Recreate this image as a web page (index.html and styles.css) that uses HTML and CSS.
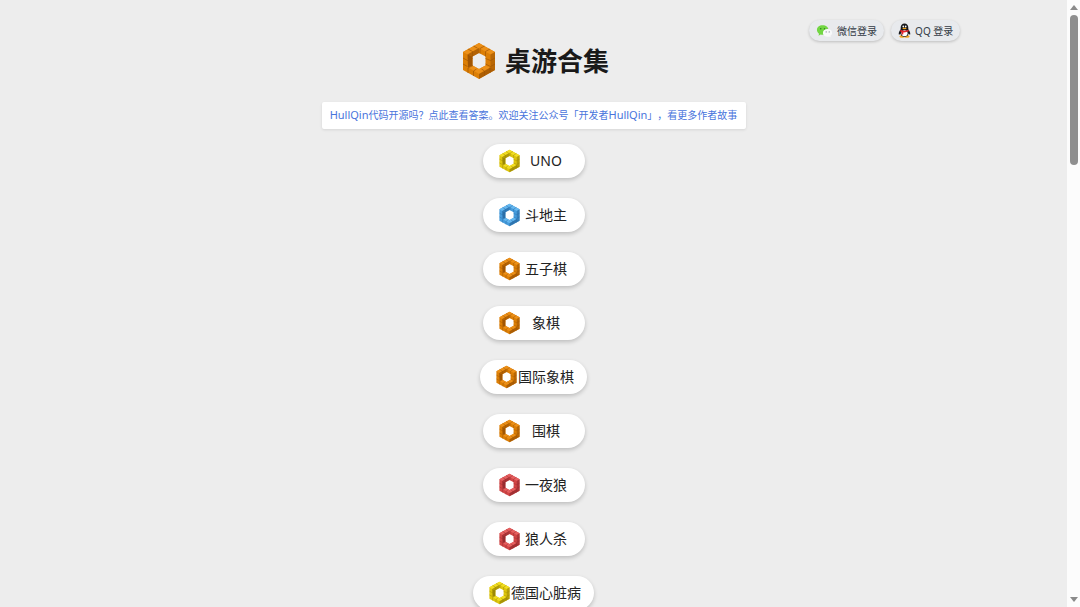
FILE: index.html
```html
<!DOCTYPE html>
<html lang="zh-CN">
<head>
  <meta charset="UTF-8" />
  <meta name="viewport" content="width=device-width, initial-scale=1" />
  <title>桌游合集</title>
  <link rel="stylesheet" href="styles.css">
</head>
<body>
  <svg class="defs" aria-hidden="true">
    <!-- hexagonal ring of blocks -->
    <symbol id="ring" viewBox="-17 -19 34 38">
      <path class="face-left" fill-rule="evenodd" d="M0-18 16-9V9L0 18-16 9V-9zM0-8-6.500-4.500v9L0 8l6.500-3.500v-9z" />
      <!-- lit faces -->
      <path class="face-top" d="M0-18-16-9l4.500 2.500L4-15.500z" />
      <path class="face-top" d="M4-15.500 16-9l-4.500 2.500L0-13z" />
      <path class="face-top" d="M-11 6.200-6.500 4.500 0 8v5z" />
      <path class="face-top" d="M0 8 6.500 4.500 11 6.500 0 13z" />
      <!-- shaded faces -->
      <path class="face-right" d="M-11.500-6.500-6.500-4.500v9l-4.500 2z" />
      <path class="face-right" d="M-11.500-6.500 0-13v5l-6.500 3.500z" opacity=".7" />
      <path class="face-right" d="M16-9V9l-4.500-2.500v-13z" opacity=".6" />
      <path class="face-right" d="M0 18 16 9l-4.500-2.500L0 13z" opacity=".8" />
      <path class="seams" d="M-5.500-15l4 2.200M-11-12l4.500 2.500v5M5.500-15 1-12.500v5M11-12 6.500-9.500v5M-16-3l4.500 2.500 5-2M-16 3l4.500 2.500M16-3l-4.500 2.500-5-2M16 3l-4.500 2.500-5-2.500M-11 12v-5l5-2.500M-5.500 15v-5l3-2M5.500 15v-5l-3-2M11 12V6.500" />
    </symbol>
  </svg>

  <div class="page">
    <nav class="login">
      <button class="login-btn" type="button">
        <svg class="wechat" viewBox="0 0 18 14" aria-hidden="true">
          <path fill="#72d643" d="M7 1C3.400 1 1 3.200 1 5.900c0 1.600.9 3 2.200 3.900L2.700 12l2.200-1.200c.7.200 1.400.3 2.100.3 3.600 0 6.200-2.300 6.200-5.100S10.600 1 7 1z" />
          <path fill="#f8f9fa" d="M12.300 5c-2.900 0-5 1.800-5 4s2.100 4 5 4c.6 0 1.100-.1 1.600-.2l1.700.9-.4-1.600c1.200-.8 1.900-1.900 1.900-3.100 0-2.200-2-4-4.800-4z" />
          <circle cx="5" cy="4.500" r=".8" fill="#2f7d22" />
          <circle cx="9" cy="4.500" r=".8" fill="#2f7d22" />
          <circle cx="10.800" cy="8" r=".7" fill="#8a9296" />
          <circle cx="14" cy="8" r=".7" fill="#8a9296" />
        </svg>
        <span>微信登录</span>
      </button>
      <button class="login-btn" type="button">
        <svg class="qq" viewBox="0 0 14 16" aria-hidden="true">
          <ellipse cx="4.500" cy="14.500" rx="3" ry="1.300" fill="#f5a51b" />
          <ellipse cx="9.500" cy="14.500" rx="3" ry="1.300" fill="#f5a51b" />
          <path fill="#16181c" d="M7 .5C4.400.5 2.900 2.500 2.900 5v1.700C1.500 8.500.6 10.300.8 12c.2 1 1.100.3 1.700-.7.600 2.200 2.200 3.600 4.500 3.600s3.900-1.400 4.500-3.600c.6 1 1.500 1.700 1.700.7.200-1.700-.7-3.500-2.100-5.300V5C11.100 2.500 9.600.5 7 .5z" />
          <ellipse cx="7" cy="11" rx="3.300" ry="3.200" fill="#fff" />
          <path fill="#e8242c" d="M2.700 7.200c2.800 1.400 5.800 1.400 8.600 0l.4 1.700c-2 1-4 1.300-6 1.200v2.300H3.900V9.700c-.6-.2-1.100-.5-1.600-.8z" />
          <ellipse cx="5.700" cy="3.700" rx=".9" ry="1.200" fill="#fff" />
          <ellipse cx="8.300" cy="3.700" rx=".9" ry="1.200" fill="#fff" />
          <ellipse cx="7" cy="5.900" rx="2.300" ry=".8" fill="#f5a51b" />
        </svg>
        <span>QQ 登录</span>
      </button>
    </nav>

    <header class="title">
      <svg class="title-icon orange" aria-hidden="true"><use href="#ring" /></svg>
      <h1>桌游合集</h1>
    </header>

    <main>
      <a class="notice" href="#about"><span class="latin">HullQin</span>代码开源吗？点此查看答案。欢迎关注公众号「开发者<span class="latin">HullQin</span>」，看更多作者故事</a>

      <div class="games">
        <button class="game" type="button"><svg class="game-icon yellow" aria-hidden="true"><use href="#ring" /></svg><span>UNO</span></button>
        <button class="game" type="button"><svg class="game-icon blue" aria-hidden="true"><use href="#ring" /></svg><span>斗地主</span></button>
        <button class="game" type="button"><svg class="game-icon orange" aria-hidden="true"><use href="#ring" /></svg><span>五子棋</span></button>
        <button class="game" type="button"><svg class="game-icon orange" aria-hidden="true"><use href="#ring" /></svg><span>象棋</span></button>
        <button class="game" type="button"><svg class="game-icon orange" aria-hidden="true"><use href="#ring" /></svg><span>国际象棋</span></button>
        <button class="game" type="button"><svg class="game-icon orange" aria-hidden="true"><use href="#ring" /></svg><span>围棋</span></button>
        <button class="game" type="button"><svg class="game-icon red" aria-hidden="true"><use href="#ring" /></svg><span>一夜狼</span></button>
        <button class="game" type="button"><svg class="game-icon red" aria-hidden="true"><use href="#ring" /></svg><span>狼人杀</span></button>
        <button class="game" type="button"><svg class="game-icon yellow" aria-hidden="true"><use href="#ring" /></svg><span>德国心脏病</span></button>
      </div>
    </main>
  </div>

  <div class="scrollbar" aria-hidden="true">
    <div class="arrow-up"></div>
    <div class="track"><div class="thumb"></div></div>
    <div class="arrow-down"></div>
  </div>
</body>
</html>
```
FILE: styles.css
```css
* {
  box-sizing: border-box;
}
body {
  margin: 0;
  height: 100vh;
  display: flex;
  overflow: hidden;
  background: #ededed;
  color: #222;
  font-family: "Noto Sans", "Noto Sans CJK SC", sans-serif;
}
button {
  border: none;
  font-family: inherit;
  cursor: pointer;
}
.defs {
  position: absolute;
  width: 0;
  height: 0;
}
.page {
  flex: 1;
  overflow: hidden;
}

/* login */
.login {
  display: flex;
  justify-content: flex-end;
  gap: 7px;
  padding: 20px 10% 0 0;
}
.login-btn {
  display: flex;
  align-items: center;
  justify-content: center;
  gap: 4px;
  height: 21px;
  padding: 0 7px;
  border-radius: 11px;
  background: #e8eaed;
  color: #333b45;
  font-size: 10px;
  line-height: 20px;
  box-shadow: 0 1px 3px rgba(0,0,0,0.2);
}
.wechat {
  width: 17px;
  height: 14px;
}
.qq {
  width: 13px;
  height: 15px;
}

/* title */
.title {
  display: flex;
  justify-content: center;
  align-items: center;
  gap: 9px;
  height: 40px;
  padding-left: 4px;
}
.title-icon {
  width: 34px;
  height: 38px;
}
h1 {
  margin: 0;
  font-size: 26px;
  line-height: 40px;
  font-weight: bold;
  color: #1a1a1a;
}

main {
  display: flex;
  flex-direction: column;
  align-items: center;
  padding-top: 21px;
}
.notice {
  min-width: 424px;
  padding: 0 7px;
  border-radius: 2px;
  background: white;
  color: #4974dc;
  font-size: 10px;
  line-height: 27px;
  text-align: center;
  text-decoration: none;
  text-spacing-trim: space-all;
  white-space: nowrap;
  box-shadow: 0 1px 3px rgba(0,0,0,0.1);
}
.latin {
  font-size: 11px;
  line-height: 1;
}

/* games */
.games {
  display: flex;
  flex-direction: column;
  align-items: center;
  gap: 20px;
  padding-top: 15px;
}
.game {
  display: flex;
  align-items: center;
  height: 34px;
  padding: 0 13px 0 15px;
  border-radius: 17px;
  background: white;
  color: #222;
  font-size: 14px;
  line-height: 34px;
  box-shadow: 0 2px 4px rgba(0,0,0,0.2);
}
.game span {
  min-width: 51px;
  text-align: center;
}
.game-icon {
  width: 23px;
  height: 24px;
}

/* ring colours */
.face-top {
  fill: var(--top);
}
.face-left {
  fill: var(--left);
}
.face-right {
  fill: var(--right);
}
.seams {
  fill: none;
  stroke: var(--right);
  stroke-width: 1;
  opacity: 0.7;
}
.orange {
  --top: #ec9018;
  --left: #dc7f06;
  --right: #a15604;
}
.yellow {
  --top: #f2de22;
  --left: #dec60c;
  --right: #9c8806;
}
.blue {
  --top: #66b8f0;
  --left: #469cdc;
  --right: #2a6ea8;
}
.red {
  --top: #e66060;
  --left: #d24646;
  --right: #982c30;
}

/* scrollbar */
.scrollbar {
  display: flex;
  flex-direction: column;
  align-items: center;
  width: 13px;
  padding: 5px 0;
  background: #fcfcfc;
}
.arrow-up, .arrow-down {
  border-left: 4px solid transparent;
  border-right: 4px solid transparent;
}
.arrow-up {
  border-bottom: 5px solid #8a8a8a;
}
.arrow-down {
  border-top: 5px solid #8a8a8a;
}
.track {
  flex: 1;
  padding: 5px 0;
}
.thumb {
  width: 8px;
  height: 26%;
  border-radius: 4px;
  background: #8f8f8f;
}
```
